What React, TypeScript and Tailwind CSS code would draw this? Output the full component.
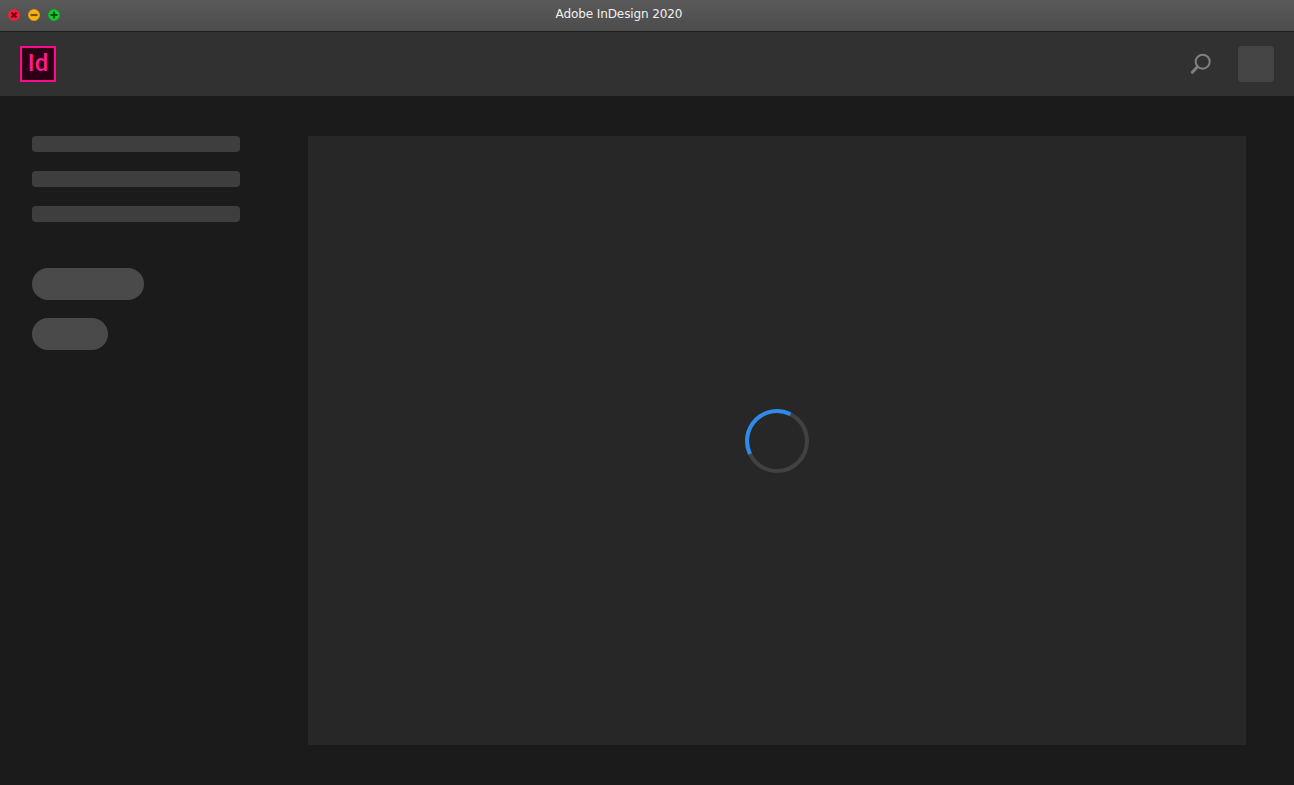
export default function App() {
  return (
    <div className="flex h-[785px] w-[1294px] flex-col overflow-hidden bg-[#1b1b1b]">
      <div className="relative flex h-8 shrink-0 items-center justify-center border-b border-b-[#1f1f1f] bg-gradient-to-b from-[#595959] to-[#4c4c4c] pr-14">
        <div className="absolute left-[8px] top-[9px] flex gap-[8px]">
          <Light fill="#fc1c3c" ring="#d8253f">
            <path d="M3.5 3.5l5 5M8.5 3.5l-5 5" stroke="#6e0714" strokeWidth="2.2" />
          </Light>
          <Light fill="#fdb30f" ring="#dc9a17">
            <path d="M2.5 6h7" stroke="#7a4e00" strokeWidth="2.2" />
          </Light>
          <Light fill="#13d02c" ring="#16a92c">
            <path d="M2.5 6h7M6 2.5v7" stroke="#04500f" strokeWidth="2.2" />
          </Light>
        </div>
        <span className="mb-[3px] font-['DejaVu_Sans',sans-serif] text-[12px] tracking-[-0.1px] text-[#f0f0f0]">Adobe InDesign 2020</span>
      </div>
      <header className="flex h-16 shrink-0 items-center justify-between bg-[#313131] pl-5 pr-5">
        <div className="flex h-9 w-9 items-center justify-center border-2 border-[#ff0a8c] bg-[#2b0016] font-['Roboto',sans-serif] text-[24px] font-medium leading-none text-[#ff1a94]">
          <span className="mt-[-3px]">Id</span>
        </div>
        <div className="flex items-center gap-[26px]">
          <svg width="22" height="22" viewBox="0 0 22 22" fill="none" stroke="#808080">
            <circle cx="12.7" cy="8.7" r="7" strokeWidth="2" />
            <path d="M7.6 13.8L2.3 19.2" strokeWidth="3" strokeLinecap="round" />
          </svg>
          <div className="h-9 w-9 rounded-[4px] bg-[#454545]" />
        </div>
      </header>
      <div className="flex flex-1 pb-10 pl-8 pr-12 pt-10">
        <aside className="flex w-[276px] shrink-0 flex-col">
          <div className="h-4 w-[208px] rounded-[4px] bg-[#3e3e3e]" />
          <div className="mt-[19px] h-4 w-[208px] rounded-[4px] bg-[#3e3e3e]" />
          <div className="mt-[19px] h-4 w-[208px] rounded-[4px] bg-[#3e3e3e]" />
          <div className="mt-[46px] h-8 w-28 rounded-full bg-[#4a4a4a]" />
          <div className="mt-[18px] h-8 w-[76px] rounded-full bg-[#4a4a4a]" />
        </aside>
        <main className="flex flex-1 items-center justify-center bg-[#272727]">
          <svg width="64" height="64" viewBox="0 0 64 64" fill="none" strokeWidth="4" className="mt-[1px]">
            <circle cx="32" cy="32" r="30" stroke="#414141" />
            <path d="M45.5 5.2A30 30 0 0 0 5 45" stroke="#2d8ceb" />
          </svg>
        </main>
      </div>
    </div>
  );
}

function Light({ fill, ring, children }: { fill: string; ring: string; children: React.ReactNode }) {
  return (
    <svg width="12" height="12" viewBox="0 0 12 12">
      <circle cx="6" cy="6" r="5.5" fill={fill} stroke={ring} />
      {children}
    </svg>
  );
}
